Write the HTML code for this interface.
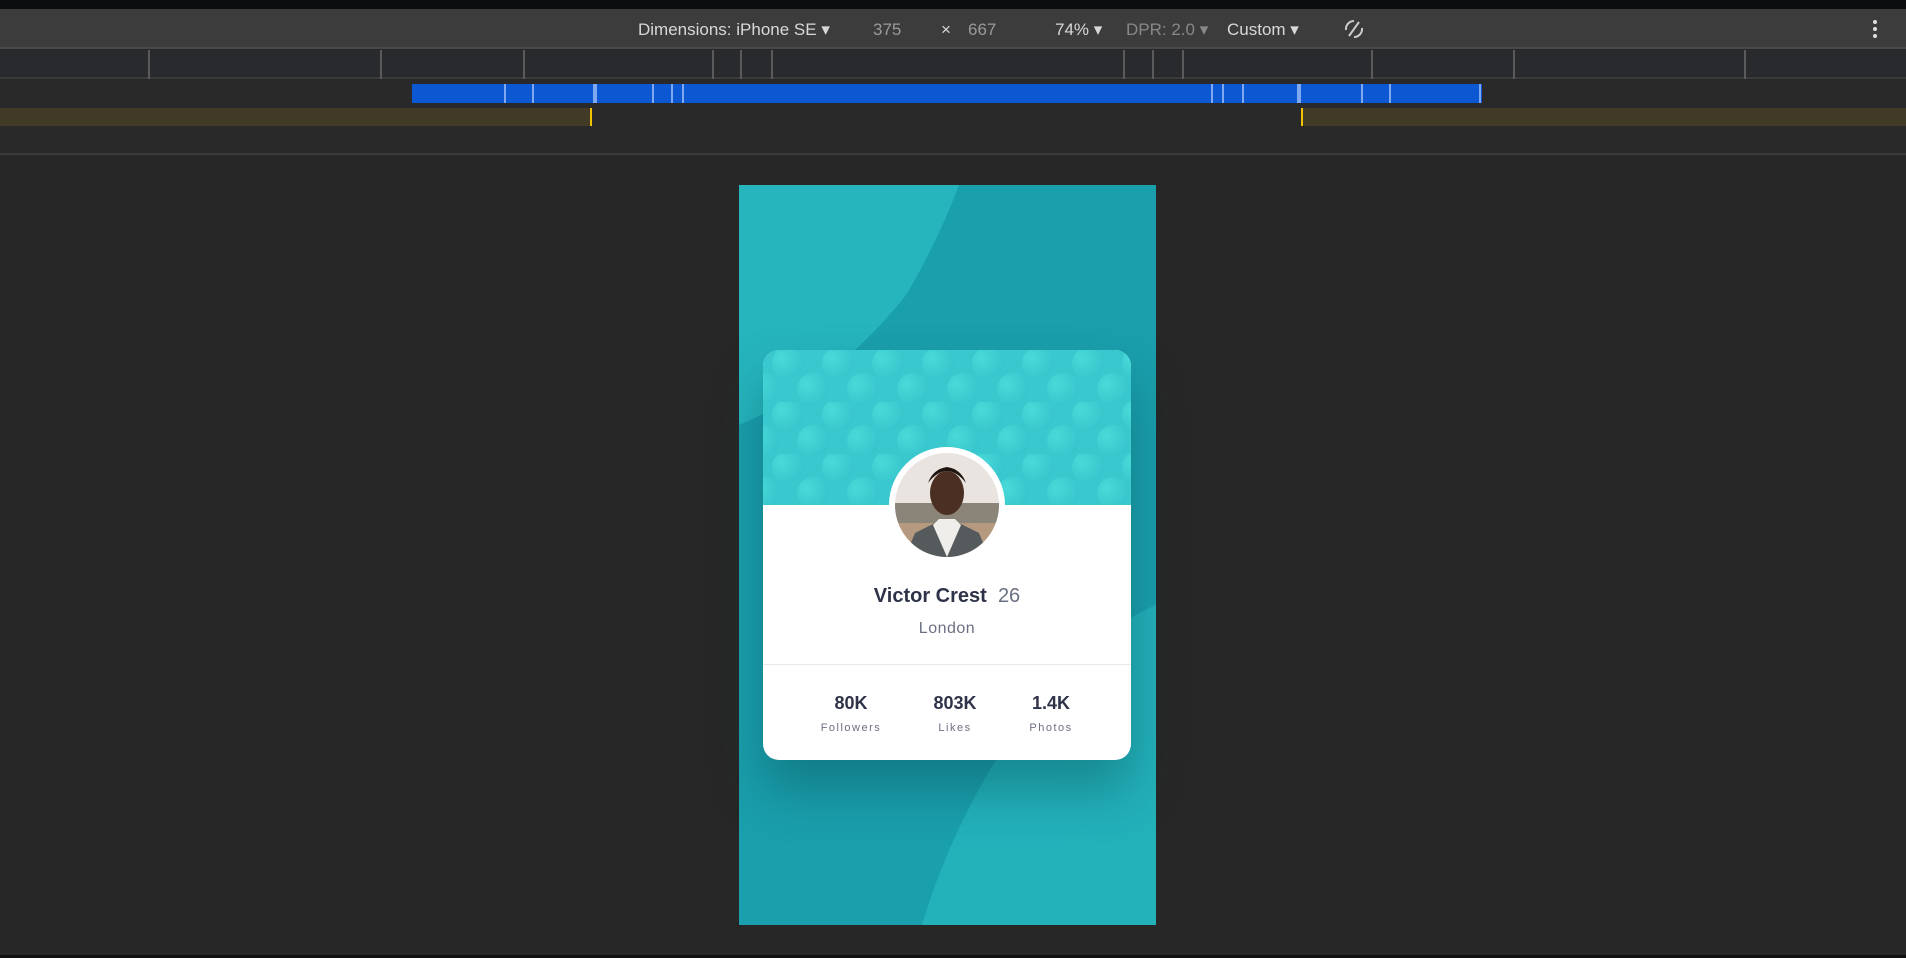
<!DOCTYPE html>
<html><head><meta charset="utf-8"><style>
*{margin:0;padding:0;box-sizing:border-box}
body{width:1906px;height:958px;background:#272727;position:relative;overflow:hidden;font-family:"Liberation Sans",sans-serif}
.abs{position:absolute}
.tb{color:#d8d8d8;font-size:17px;top:20px;white-space:nowrap}
.tick{position:absolute;top:50px;width:2px;height:29px;background:#5a5a5a}
.bm{position:absolute;top:84px;width:2px;height:19px;background:#7fa8f0}
.card{position:absolute;left:763px;top:350px;width:368px;height:410px;border-radius:16px;background:#fff;overflow:hidden;box-shadow:0 30px 50px rgba(0,60,70,.35)}
.stat{position:absolute;top:343px;width:100px;margin-left:-50px;text-align:center}
.stat b{display:block;font-size:18px;color:#2e3349}
.stat span{display:block;font-size:11px;color:#6b7082;letter-spacing:1.5px;margin-top:8px}
</style></head><body>
<div class="abs" style="left:0;top:0;width:1906px;height:9px;background:#0b0d0f"></div>
<div class="abs" style="left:0;top:9px;width:1906px;height:40px;background:#3c3c3c;border-bottom:2px solid #4a4a4a"></div>
<div class="abs tb" style="left:638px">Dimensions: iPhone SE ▾</div>
<div class="abs tb" style="left:873px;color:#9a9a9a">375</div>
<div class="abs tb" style="left:941px">×</div>
<div class="abs tb" style="left:968px;color:#9a9a9a">667</div>
<div class="abs tb" style="left:1055px">74% ▾</div>
<div class="abs tb" style="left:1126px;color:#888">DPR: 2.0 ▾</div>
<div class="abs tb" style="left:1227px">Custom ▾</div>
<svg class="abs" style="left:1341px;top:16px" width="26" height="26" viewBox="0 0 26 26" fill="none" stroke="#ccc" stroke-width="2"><path d="M8 20 L18 6 M5 14a8 8 0 0 1 8-9 M21 12a8 8 0 0 1-8 9"/></svg>
<div class="abs" style="left:1873px;top:20px;width:4px;height:4px;background:#ddd;border-radius:2px;box-shadow:0 7px 0 #ddd,0 14px 0 #ddd"></div>
<div class="abs" style="left:0;top:50px;width:1906px;height:29px;background:#292a2d;border-bottom:2px solid #3a3a3a"></div>
<div class="tick" style="left:148px"></div><div class="tick" style="left:380px"></div><div class="tick" style="left:523px"></div><div class="tick" style="left:712px"></div><div class="tick" style="left:740px"></div><div class="tick" style="left:771px"></div><div class="tick" style="left:1123px"></div><div class="tick" style="left:1152px"></div><div class="tick" style="left:1182px"></div><div class="tick" style="left:1371px"></div><div class="tick" style="left:1513px"></div><div class="tick" style="left:1744px"></div>
<div class="abs" style="left:0;top:81px;width:1906px;height:72px;background:#292929"></div>
<div class="abs" style="left:412px;top:84px;width:1070px;height:19px;background:#0c57d2"></div>
<div class="bm" style="left:504px"></div><div class="bm" style="left:532px"></div><div class="bm" style="left:593px;width:4px"></div><div class="bm" style="left:652px"></div><div class="bm" style="left:671px"></div><div class="bm" style="left:682px"></div><div class="bm" style="left:1211px"></div><div class="bm" style="left:1222px"></div><div class="bm" style="left:1242px"></div><div class="bm" style="left:1297px;width:4px"></div><div class="bm" style="left:1361px"></div><div class="bm" style="left:1389px"></div><div class="bm" style="left:1479px"></div>
<div class="abs" style="left:0;top:108px;width:592px;height:18px;background:#403a26;border-right:2px solid #f2c200"></div>
<div class="abs" style="left:1301px;top:108px;width:605px;height:18px;background:#403a26;border-left:2px solid #f2c200"></div>
<div class="abs" style="left:0;top:153px;width:1906px;height:2px;background:#3a3a3a"></div>
<div class="abs" style="left:0;top:955px;width:1906px;height:3px;background:#111"></div>

<svg class="abs" style="left:739px;top:185px" width="417" height="740" viewBox="0 0 417 740">
<rect width="417" height="740" fill="#1a9fac"/>
<path d="M0 0 H220 C205 40 185 80 167 110 C120 170 60 215 0 240 Z" fill="#26b5bd"/>
<path d="M183 740 C215 630 300 470 417 420 V740 Z" fill="#23b1ba"/>
</svg>

<div class="card">
<svg width="368" height="155" style="display:block">
<defs>
<radialGradient id="g" cx="0.3" cy="0.35" r="0.7"><stop offset="0" stop-color="#48dad8"/><stop offset="1" stop-color="#38c6cd"/></radialGradient>
<pattern id="p" width="50" height="52" patternUnits="userSpaceOnUse"><rect width="50" height="52" fill="#3ac8cf"/><circle cx="25" cy="13" r="16" fill="url(#g)"/><circle cx="0" cy="39" r="16" fill="url(#g)"/><circle cx="50" cy="39" r="16" fill="url(#g)"/></pattern>
</defs>
<rect width="368" height="155" fill="url(#p)"/>
</svg>
<div class="abs" style="left:126px;top:97px;width:116px;height:116px;border-radius:50%;background:#fff"></div>
<svg class="abs" style="left:132px;top:103px" width="104" height="104" viewBox="0 0 104 104">
<defs><clipPath id="c"><circle cx="52" cy="52" r="52"/></clipPath></defs>
<g clip-path="url(#c)">
<rect width="104" height="104" fill="#e9e4e0"/>
<rect y="50" width="104" height="20" fill="#8a8578"/>
<rect y="70" width="104" height="34" fill="#b69a80"/>
<path d="M10 104 L20 80 L40 70 L64 70 L84 80 L94 104Z" fill="#555a5c"/>
<path d="M38 72 L52 104 L66 72 L60 66 L44 66Z" fill="#f0eeea"/>
<ellipse cx="52" cy="40" rx="17" ry="22" fill="#4a2f22"/>
<path d="M33 30 Q52 6 71 30 Q66 16 52 14 Q38 16 33 30Z" fill="#1e1410"/>
</g></svg>
<div class="abs" style="left:0;top:235px;width:368px;text-align:center;font-size:20px;color:#2e3349"><b>Victor Crest</b>&nbsp; <span style="color:#6b7082">26</span></div>
<div class="abs" style="left:0;top:270px;width:368px;text-align:center;font-size:16px;color:#6b7082;letter-spacing:.5px">London</div>
<div class="abs" style="left:0;top:314px;width:368px;height:1px;background:#e8e9ec"></div>
<div class="stat" style="left:88px"><b>80K</b><span>Followers</span></div>
<div class="stat" style="left:192px"><b>803K</b><span>Likes</span></div>
<div class="stat" style="left:288px"><b>1.4K</b><span>Photos</span></div>
</div>
</body></html>
